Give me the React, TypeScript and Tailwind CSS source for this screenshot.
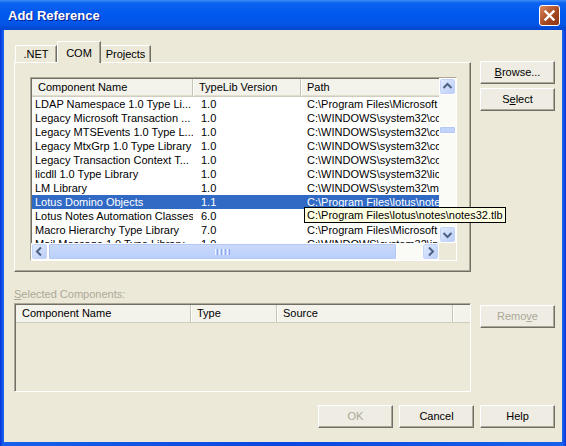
import React from "react";

const rows: [string, string, string][] = [
  ["LDAP Namespace 1.0 Type Li...", "1.0", "C:\\Program Files\\Microsoft Common\\adsldp.dll"],
  ["Legacy Microsoft Transaction ...", "1.0", "C:\\WINDOWS\\system32\\comsvcs.dll"],
  ["Legacy MTSEvents 1.0 Type L...", "1.0", "C:\\WINDOWS\\system32\\comsvcs.dll"],
  ["Legacy MtxGrp 1.0 Type Library", "1.0", "C:\\WINDOWS\\system32\\comsvcs.dll"],
  ["Legacy Transaction Context T...", "1.0", "C:\\WINDOWS\\system32\\comsvcs.dll"],
  ["licdll 1.0 Type Library", "1.0", "C:\\WINDOWS\\system32\\licdll.dll"],
  ["LM Library", "1.0", "C:\\WINDOWS\\system32\\milcore.dll"],
  ["Lotus Domino Objects", "1.1", "C:\\Program Files\\lotus\\notes\\domobj.tlb"],
  ["Lotus Notes Automation Classes", "6.0", "C:\\Program Files\\lotus\\notes\\notes32.tlb"],
  ["Macro Hierarchy Type Library", "7.0", "C:\\Program Files\\Microsoft Visual Studio\\mh.tlb"],
  ["Mail Message 1.0 Type Library", "1.0", "C:\\WINDOWS\\system32\\inetcomm.dll"],
];

function Arrow({ dir }: { dir: "up" | "down" | "left" | "right" }) {
  const d = {
    up: "M4.5 10 L8.5 6 L12.5 10",
    down: "M4.5 7 L8.5 11 L12.5 7",
    left: "M10 4.5 L6 8.5 L10 12.5",
    right: "M7 4.5 L11 8.5 L7 12.5",
  }[dir];
  return (
    <div className="w-[17px] h-[17px] shrink-0 rounded-[3px] border border-white bg-[linear-gradient(135deg,#E4ECFE,#B9CCF7)] shadow-[inset_0_0_0_1px_#C3D3F8]">
      <svg width="15" height="15" viewBox="1 1 15 15">
        <path d={d} fill="none" stroke="#4D6185" strokeWidth="2" />
      </svg>
    </div>
  );
}

function Button({ label, u, disabled }: { label: string; u?: number; disabled?: boolean }) {
  const text =
    u === undefined ? (
      label
    ) : (
      <>
        {label.slice(0, u)}
        <span className="underline">{label[u]}</span>
        {label.slice(u + 1)}
      </>
    );
  return (
    <div
      className={
        "w-[75px] h-[23px] flex items-center justify-center text-[11px] bg-[#EEECE3] border border-t-white border-l-white border-r-[#716F64] border-b-[#716F64] shadow-[inset_-1px_-1px_0_#ACA899] " +
        (disabled ? "text-[#ACA899]" : "text-black")
      }
    >
      {text}
    </div>
  );
}

export default function App() {
  return (
    <div className="relative w-[566px] h-[446px] flex flex-col bg-[linear-gradient(to_right,#0831D9,#1660EC_3px,#0A47E0_50%,#1660EC_calc(100%-3px),#0831D9)] font-['Liberation_Sans',Arial,sans-serif] text-[11px] overflow-hidden select-none">
      {/* title bar */}
      <div className="h-[30px] shrink-0 flex items-center justify-between pl-[8px] pr-[6px] bg-[linear-gradient(to_bottom,#3C8CF6_0%,#0C63F0_10%,#0058EE_45%,#0355E6_80%,#0346CE_100%)]">
        <span className="text-white font-bold text-[13px] pt-[1px] [text-shadow:1px_1px_0_#0A1E8C]">Add Reference</span>
        <div className="w-[21px] h-[21px] mt-[1px] rounded-[3px] border border-white bg-[linear-gradient(135deg,#D9875E,#A4461F_60%,#8A3516)] flex items-center justify-center">
          <svg width="13" height="13" viewBox="0 0 13 13">
            <path d="M2.5 2.5 L10.5 10.5 M10.5 2.5 L2.5 10.5" stroke="white" strokeWidth="2.4" strokeLinecap="square" />
          </svg>
        </div>
      </div>

      {/* body */}
      <div className="flex-1 mx-[4px] mb-[4px] bg-[#ECE9D8] flex flex-col pt-[10px] pl-[10px] pr-[7px]">
        {/* top section */}
        <div className="flex gap-[9px]">
          <div className="w-[457px] flex flex-col">
            {/* tabs */}
            <div className="h-[22px] flex items-end pl-[1px]">
              <div className="w-[42px] h-[17px] flex items-center justify-center bg-[#ECE9D8] border-l border-t border-white border-r border-r-[#716F64] rounded-tl-[2px] shadow-[inset_-1px_0_0_#ACA899]">
                .NET
              </div>
              <div className="relative z-10 -mb-[1px] w-[44px] h-[22px] flex items-start justify-center pt-[3px] bg-[#ECE9D8] border-l border-t border-white border-r border-r-[#716F64] rounded-tl-[2px] shadow-[inset_-1px_0_0_#ACA899]">
                COM
              </div>
              <div className="w-[50px] h-[17px] flex items-center justify-center bg-[#ECE9D8] border-t border-white border-r border-r-[#716F64] shadow-[inset_-1px_0_0_#ACA899]">
                Projects
              </div>
            </div>
            {/* panel */}
            <div className="h-[210px] border-l border-t border-white border-r border-b border-r-[#716F64] border-b-[#716F64] shadow-[inset_-1px_-1px_0_#ACA899] pl-[15px] pt-[14px]">
              {/* list view */}
              <div className="w-[427px] h-[184px] flex flex-col bg-white border border-t-[#ACA899] border-l-[#ACA899] border-r-white border-b-white shadow-[inset_1px_1px_0_#716F64]">
                <div className="flex flex-1 min-h-0">
                  <div className="flex-1 min-w-0 flex flex-col overflow-hidden pl-[1px] pt-[1px]">
                    <div className="h-[18px] shrink-0 flex bg-[#F3F2EB] border-b border-[#D0CDBF] shadow-[inset_0_-1px_0_#E2DECD]">
                      <div className="w-[161px] pl-[6px] flex items-center border-r border-[#C7C5B2] shadow-[1px_0_0_white]">Component Name</div>
                      <div className="w-[108px] pl-[6px] flex items-center border-r border-[#C7C5B2] shadow-[1px_0_0_white]">TypeLib Version</div>
                      <div className="flex-1 pl-[6px] flex items-center">Path</div>
                    </div>
                    {rows.map(([name, ver, path], i) => {
                      const sel = i === 7;
                      return (
                        <div
                          key={i}
                          className={
                            "h-[14px] shrink-0 flex leading-[14px] whitespace-nowrap " +
                            (sel ? "bg-[#316AC5] text-white" : "text-black")
                          }
                        >
                          <div className="w-[161px] pl-[3px] overflow-hidden">{name}</div>
                          <div className="w-[108px] pl-[8px] overflow-hidden">{ver}</div>
                          <div className="flex-1 pl-[6px] overflow-hidden">{path}</div>
                        </div>
                      );
                    })}
                  </div>
                  {/* vertical scrollbar */}
                  <div className="w-[17px] shrink-0 flex flex-col bg-[#FAFAF6]">
                    <Arrow dir="up" />
                    <div className="h-[31px]" />
                    <div className="h-[8px] rounded-[2px] border border-white bg-[#C3D4FB] shadow-[inset_0_0_0_1px_#B4C8F6]" />
                    <div className="flex-1" />
                    <Arrow dir="down" />
                  </div>
                </div>
                {/* horizontal scrollbar */}
                <div className="h-[17px] shrink-0 flex">
                  <div className="flex-1 flex bg-[#FAFAF6]">
                    <Arrow dir="left" />
                    <div className="w-[349px] h-[17px] rounded-[2px] border border-white bg-[linear-gradient(to_bottom,#CCDAFC,#B9CEFB)] shadow-[inset_0_0_0_1px_#B4C8F6] flex items-center justify-center gap-[1px]">
                      <div className="w-[1px] h-[6px] bg-[#EEF4FE]" />
                      <div className="w-[1px] h-[6px] bg-[#8CA8EC]" />
                      <div className="w-[1px] h-[6px] bg-[#EEF4FE]" />
                      <div className="w-[1px] h-[6px] bg-[#8CA8EC]" />
                      <div className="w-[1px] h-[6px] bg-[#EEF4FE]" />
                      <div className="w-[1px] h-[6px] bg-[#8CA8EC]" />
                      <div className="w-[1px] h-[6px] bg-[#EEF4FE]" />
                      <div className="w-[1px] h-[6px] bg-[#8CA8EC]" />
                    </div>
                    <div className="flex-1" />
                    <Arrow dir="right" />
                  </div>
                  <div className="w-[17px] bg-[#ECE9D8]" />
                </div>
              </div>
            </div>
          </div>
          <div className="flex flex-col gap-[4px] pt-[21px]">
            <Button label="Browse..." u={0} />
            <Button label="Select" u={1} />
          </div>
        </div>

        {/* selected components label */}
        <div className="h-[31px] pt-[16px] pl-[0px] leading-[13px] text-[#ACA899]">
          <span className="underline">S</span>elected Components:
        </div>

        {/* bottom list */}
        <div className="flex gap-[9px]">
          <div className="w-[457px] h-[89px] flex flex-col border border-t-[#ACA899] border-l-[#ACA899] border-r-white border-b-white shadow-[inset_1px_1px_0_#716F64] pl-[1px] pt-[1px]">
            <div className="h-[18px] flex bg-[#F3F2EB] border-b border-[#D0CDBF]">
              <div className="w-[175px] pl-[6px] flex items-center border-r border-[#C7C5B2] shadow-[1px_0_0_white]">Component Name</div>
              <div className="w-[86px] pl-[6px] flex items-center border-r border-[#C7C5B2] shadow-[1px_0_0_white]">Type</div>
              <div className="w-[176px] pl-[6px] flex items-center border-r border-[#C7C5B2] shadow-[1px_0_0_white]">Source</div>
              <div className="flex-1" />
            </div>
          </div>
          <div className="pt-[2px]">
            <Button label="Remove" u={4} disabled />
          </div>
        </div>

        {/* bottom buttons */}
        <div className="mt-[13px] flex justify-end gap-[6px]">
          <Button label="OK" disabled />
          <Button label="Cancel" />
          <Button label="Help" />
        </div>
      </div>

      {/* tooltip */}
      <div className="absolute left-[304px] top-[207px] h-[16px] px-[2px] border border-black bg-[#FFFFE1] text-black leading-[14px] whitespace-nowrap z-20">
        C:\Program Files\lotus\notes\notes32.tlb
      </div>
    </div>
  );
}
